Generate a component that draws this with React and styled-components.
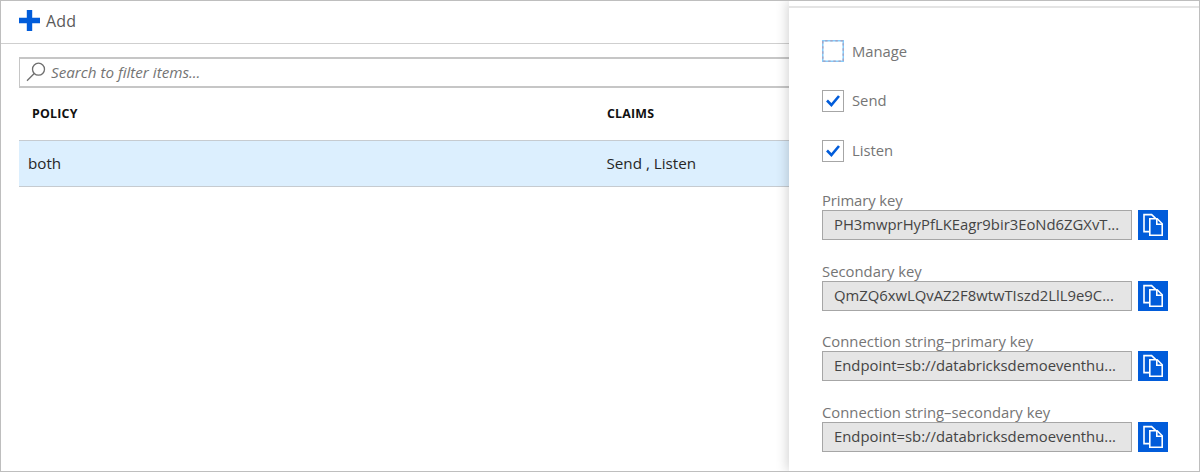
import React from "react";
import styled, { createGlobalStyle } from "styled-components";

const GlobalStyle = createGlobalStyle`
  *, *::before, *::after { box-sizing: border-box; }
  body { margin: 0; background: #fff; }
`;

const Window = styled.div`
  display: flex;
  width: 1200px;
  height: 472px;
  overflow: hidden;
  border: 1px solid #bebebe;
  background: #fff;
  font-family: "Open Sans", "Noto Sans", sans-serif;
  font-size: 14.84px;
  line-height: 20px;
  color: #222;
`;

const ListPane = styled.main`
  width: 788px;
  flex: none;
  overflow: hidden;
`;

const Toolbar = styled.header`
  display: flex;
  align-items: center;
  gap: 6px;
  height: 43px;
  padding: 0 0 4px 18px;
  border-bottom: 1px solid #cfcfcf;
`;

const AddLabel = styled.span`
  padding-top: 2px;
  font-size: 16px;
  letter-spacing: 0.2px;
  color: #5a5a5a;
`;

const Content = styled.section`
  padding: 13px 0 0 18px;
`;

const SearchBox = styled.div`
  display: flex;
  align-items: center;
  gap: 5px;
  height: 31px;
  padding: 0 0 1px 6px;
  border: solid #c6c6c6;
  border-width: 2px 0 2px 1px;
`;

const Placeholder = styled.span`
  margin-top: -1px;
  font-style: italic;
  font-size: 15.2px;
  color: #747474;
`;

const Row = styled.div`
  display: grid;
  grid-template-columns: 578px 1fr;
  align-items: center;
`;

const HeadRow = styled(Row)`
  height: 52px;
  padding-left: 10px;
  font-size: 12.4px;
  letter-spacing: 0.2px;
  font-weight: 700;
  color: #111;
`;

const HeadCell = styled.span`
  padding-left: ${(p) => (p.$indent ? "3px" : "0")};
`;

const PolicyRow = styled(Row)`
  height: 47px;
  padding: 0 0 2px 9px;
  border: solid #c6cbd0;
  border-width: 1px 0;
  background: #dceffe;
  font-size: 15.2px;
  color: #262626;
`;

const ClaimsCell = styled.span`
  padding-left: 0.5px;
`;

const Panel = styled.aside`
  flex: 1;
  z-index: 1;
  padding-top: 5px;
  background: #fff;
  box-shadow: -2px 0 11px rgba(0, 0, 0, 0.17);
`;

const PanelBody = styled.div`
  padding: 27px 31px 0 33px;
  border-top: 2px solid #e4e4e4;
`;

const CheckRow = styled.div`
  display: flex;
  align-items: center;
  gap: 8px;
  height: 22px;
  margin: 5px 0 27.8px;
  color: #757575;
  font-size: 14.8px;
`;

const CheckLabel = styled.span`
  margin-top: -1px;
`;

const CheckBox = styled.span`
  display: grid;
  place-items: center;
  width: 22px;
  height: 22px;
  border: ${(p) => (p.$focused ? "0" : "1px solid #a6a6a6")};
`;

const KeyList = styled.div`
  padding-top: 0.8px;
`;

const KeyField = styled.div`
  height: 50px;
  margin-bottom: 20.6px;
`;

const KeyLabel = styled.div`
  height: 20px;
  white-space: nowrap;
  color: #757575;
  letter-spacing: ${(p) => p.$tracking || 0}px;
`;

const KeyLine = styled.div`
  display: flex;
  gap: 6px;
`;

const KeyValue = styled.div`
  width: 310px;
  height: 30px;
  padding-left: 11px;
  border: 1px solid #a6a6a6;
  background: #e5e5e5;
  line-height: 27px;
  white-space: nowrap;
  color: #444;
`;

const CopyButton = styled.button`
  display: grid;
  place-items: center;
  width: 30px;
  height: 30px;
  padding: 0;
  border: 0;
  background: #015cda;
`;

const PlusIcon = () => (
  <svg width="21" height="21" viewBox="0 0 21 21">
    <path d="M10.5 0v21M0 10.5h21" stroke="#015cda" strokeWidth="5.4" />
  </svg>
);

const SearchIcon = () => (
  <svg width="20" height="20" viewBox="0 0 20 20" fill="none" stroke="#6e6e6e" strokeWidth="1.3">
    <circle cx="12.5" cy="7.2" r="6" />
    <path d="M8.2 11.5 1 18.8" />
  </svg>
);

const CheckIcon = () => (
  <svg width="14" height="12" viewBox="0 0 14 12" fill="none" stroke="#015cda" strokeWidth="2.6">
    <path d="M1 5.5 5.4 10 13 1" />
  </svg>
);

const FocusRing = () => (
  <svg width="22" height="22" viewBox="0 0 22 22" fill="none" strokeWidth="1.5">
    <rect x="0.75" y="0.75" width="20.5" height="20.5" stroke="#86cdfb" />
    <rect x="0.75" y="0.75" width="20.5" height="20.5" stroke="#a5a5c6" strokeDasharray="2.4 2.725" strokeDashoffset="-2.4" />
  </svg>
);

const CopyIcon = () => (
  <svg width="30" height="30" viewBox="0 0 30 30" fill="none" stroke="#fff" strokeWidth="1.6">
    <path d="M11 21.6H6V4.6H13.6L17.6 8.4" />
    <path d="M11.8 8.8H19.2L24.2 13.8V25.2H11.8Z" />
    <path d="M18.8 8.8V14.2H24.2" />
  </svg>
);

const claims = [
  { name: "Manage", focused: true },
  { name: "Send", checked: true },
  { name: "Listen", checked: true },
];

const keys = [
  { label: "Primary key", tracking: -0.1, value: "PH3mwprHyPfLKEagr9bir3EoNd6ZGXvT..." },
  { label: "Secondary key", value: "QmZQ6xwLQvAZ2F8wtwTIszd2LlL9e9C..." },
  { label: "Connection string–primary key", value: "Endpoint=sb://databricksdemoeventhu..." },
  { label: "Connection string–secondary key", value: "Endpoint=sb://databricksdemoeventhu..." },
];

export default function App() {
  return (
    <>
      <GlobalStyle />
      <Window>
        <ListPane>
          <Toolbar>
            <PlusIcon />
            <AddLabel>Add</AddLabel>
          </Toolbar>
          <Content>
            <SearchBox>
              <SearchIcon />
              <Placeholder>Search to filter items...</Placeholder>
            </SearchBox>
            <HeadRow>
              <HeadCell $indent>POLICY</HeadCell>
              <HeadCell>CLAIMS</HeadCell>
            </HeadRow>
            <PolicyRow>
              <span>both</span>
              <ClaimsCell>Send , Listen</ClaimsCell>
            </PolicyRow>
          </Content>
        </ListPane>
        <Panel>
          <PanelBody>
            {claims.map((c) => (
              <CheckRow key={c.name}>
                <CheckBox $focused={c.focused}>
                  {c.focused && <FocusRing />}
                  {c.checked && <CheckIcon />}
                </CheckBox>
                <CheckLabel>{c.name}</CheckLabel>
              </CheckRow>
            ))}
            <KeyList>
              {keys.map((k) => (
                <KeyField key={k.label}>
                  <KeyLabel $tracking={k.tracking}>{k.label}</KeyLabel>
                  <KeyLine>
                    <KeyValue>{k.value}</KeyValue>
                    <CopyButton aria-label="Copy">
                      <CopyIcon />
                    </CopyButton>
                  </KeyLine>
                </KeyField>
              ))}
            </KeyList>
          </PanelBody>
        </Panel>
      </Window>
    </>
  );
}
